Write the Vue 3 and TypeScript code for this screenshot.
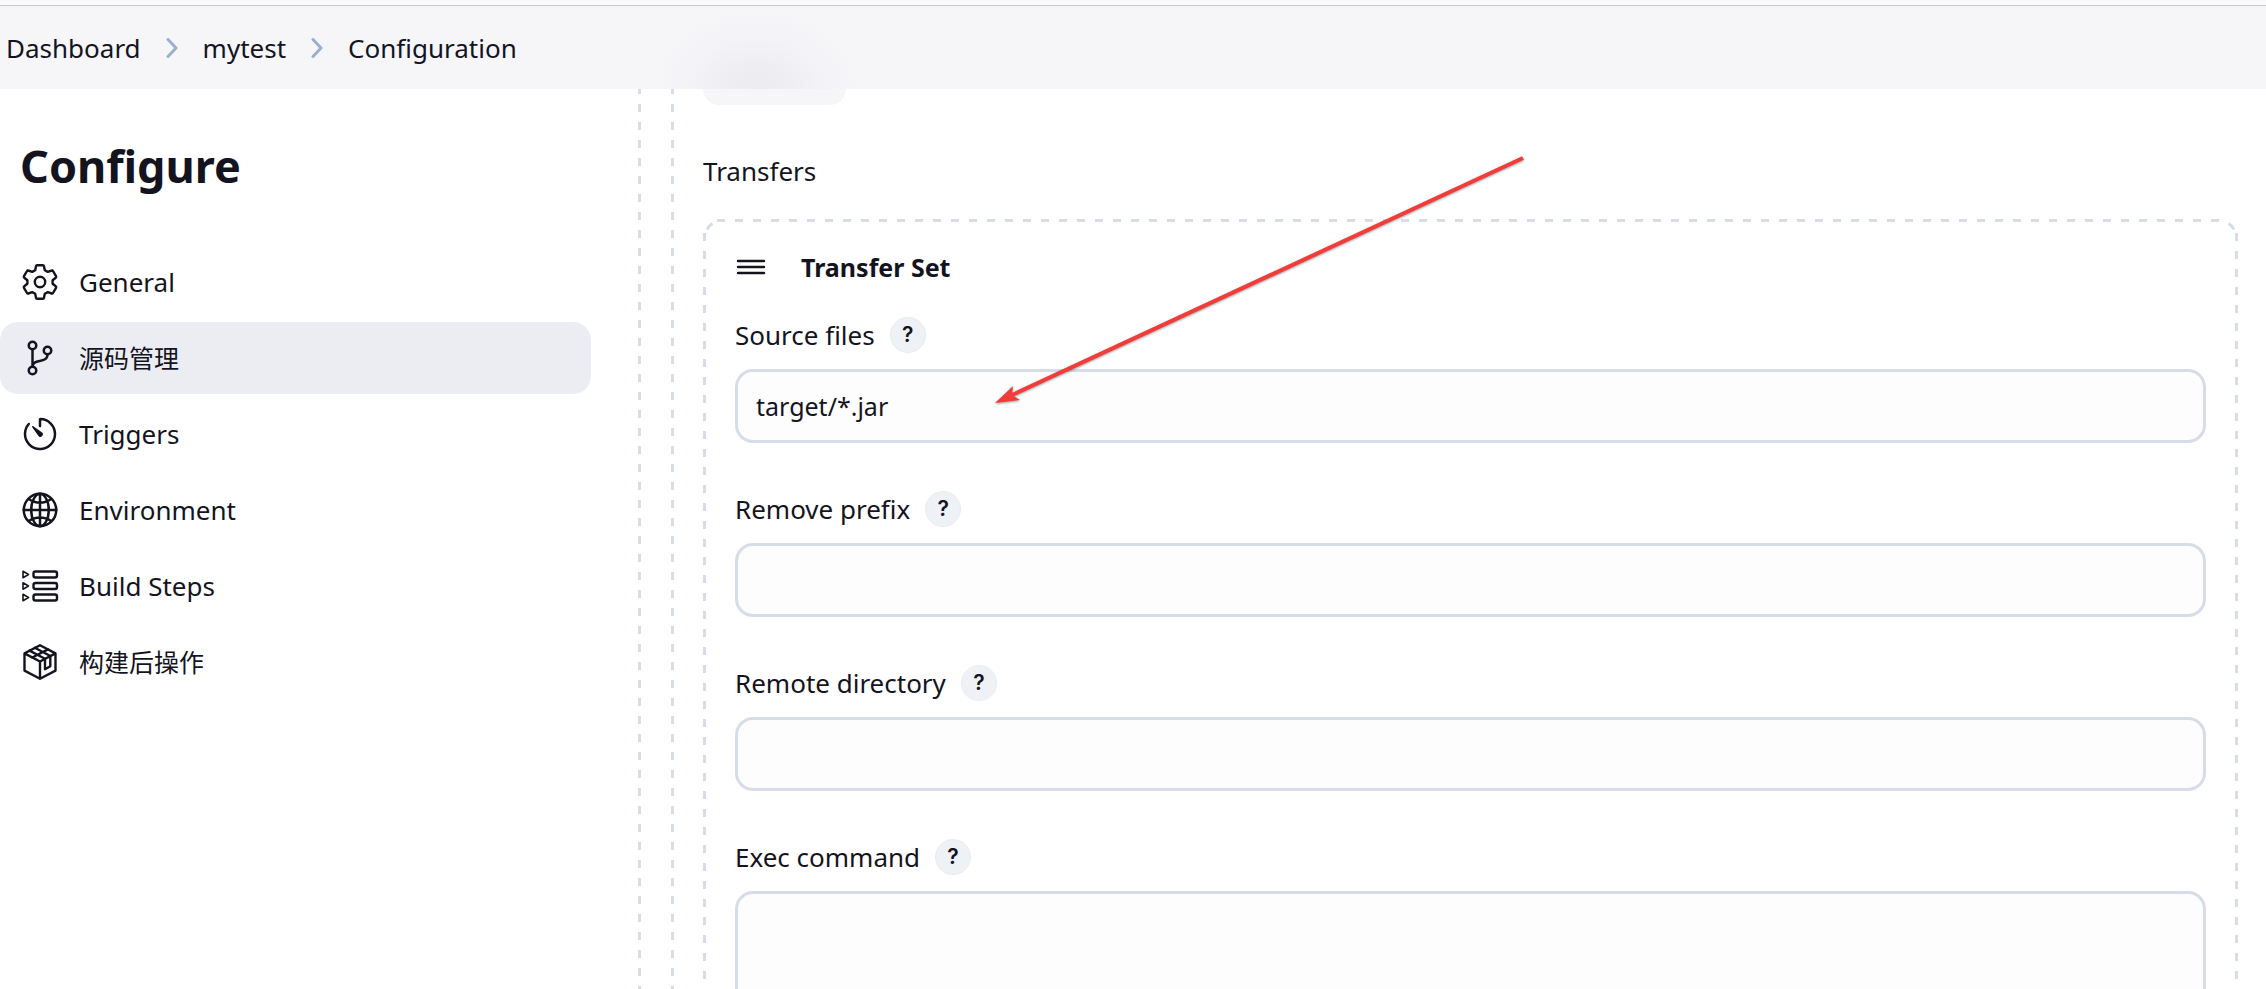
<script setup lang="ts">
import { ref } from 'vue'

interface NavItem {
  label: string
  icon: 'gear' | 'branch' | 'timer' | 'globe' | 'steps' | 'package'
  cjk?: boolean
}

interface Field {
  id: string
  label: string
  value: string
  multiline?: boolean
}

const crumbs = ['Dashboard', 'mytest', 'Configuration']

const navItems: NavItem[] = [
  { label: 'General', icon: 'gear' },
  { label: '源码管理', icon: 'branch', cjk: true },
  { label: 'Triggers', icon: 'timer' },
  { label: 'Environment', icon: 'globe' },
  { label: 'Build Steps', icon: 'steps' },
  { label: '构建后操作', icon: 'package', cjk: true },
]
const active = ref(1)

const fields = ref<Field[]>([
  { id: 'source-files', label: 'Source files', value: 'target/*.jar' },
  { id: 'remove-prefix', label: 'Remove prefix', value: '' },
  { id: 'remote-directory', label: 'Remote directory', value: '' },
  { id: 'exec-command', label: 'Exec command', value: '', multiline: true },
])
</script>

<template>
  <div class="page">
    <header class="topbar">
      <nav class="crumbs" aria-label="Breadcrumb">
        <template v-for="(crumb, i) in crumbs" :key="crumb">
          <svg v-if="i > 0" class="chevron" viewBox="0 0 12 20" aria-hidden="true">
            <path d="M2 1.5L10 10L2 18.5" />
          </svg>
          <a href="#">{{ crumb }}</a>
        </template>
      </nav>
    </header>

    <div class="body">
      <aside class="sidebar">
        <h1>Configure</h1>
        <nav class="tasks" aria-label="Sections">
          <a
            v-for="(item, i) in navItems"
            :key="item.label"
            href="#"
            class="task"
            :class="{ active: i === active, cjk: item.cjk }"
            @click.prevent="active = i"
          >
            <svg v-if="item.icon === 'gear'" class="icon" viewBox="-20 -20 40 40" aria-hidden="true">
              <g class="fine">
                <path d="M-4.8-11.8L-4-15.8Q-3.8-16.8-2.8-16.8H2.8Q3.8-16.8 4-15.8L4.8-11.8L7.8-10.1L11.7-11.5Q12.5-11.9 13-11L16-5.8Q16.5-4.9 15.8-4.3L12.6-1.7V1.7L15.8 4.3Q16.5 4.9 16 5.8L13 11Q12.5 11.9 11.7 11.5L7.8 10.1L4.8 11.8L4 15.8Q3.8 16.8 2.8 16.8H-2.8Q-3.8 16.8-4 15.8L-4.8 11.8L-7.8 10.1L-11.7 11.5Q-12.5 11.9-13 11L-16 5.8Q-16.5 4.9-15.8 4.3L-12.6 1.7V-1.7L-15.8-4.3Q-16.5-4.9-16-5.8L-13-11Q-12.5-11.9-11.7-11.5L-7.8-10.1Z" />
                <circle r="5.2" />
              </g>
            </svg>
            <svg v-else-if="item.icon === 'branch'" class="icon" viewBox="0 0 512 512" aria-hidden="true">
              <circle cx="160" cy="96" r="48" />
              <circle cx="160" cy="416" r="48" />
              <circle cx="352" cy="160" r="48" />
              <path d="M160 368V144M352 208c0 128-192 48-192 160" />
            </svg>
            <svg v-else-if="item.icon === 'timer'" class="icon" viewBox="0 0 512 512" aria-hidden="true">
              <path d="M112.91 128A191.85 191.85 0 0064 254c-1.18 106.35 85.65 193.8 192 194 106.2.2 192-85.83 192-192 0-104.54-83.55-189.61-187.5-192a4.36 4.36 0 00-4.5 4.37V152" />
              <path class="solid" d="M233.38 278.63l-79-113a8.13 8.13 0 0111.32-11.32l113 79a32.5 32.5 0 01-37.25 53.26 33.21 33.21 0 01-8.07-7.94z" />
            </svg>
            <svg v-else-if="item.icon === 'globe'" class="icon" viewBox="0 0 512 512" aria-hidden="true">
              <circle cx="256" cy="256" r="208" />
              <path d="M256 48c-58.07 0-112.67 93.13-112.67 208S197.93 464 256 464s112.67-93.13 112.67-208S314.07 48 256 48zM117.33 117.33c38.24 27.15 86.38 43.34 138.67 43.34s100.43-16.19 138.67-43.34M394.67 394.67c-38.24-27.15-86.38-43.34-138.67-43.34s-100.43 16.19-138.67 43.34M256 48v416M464 256H48" />
            </svg>
            <svg v-else-if="item.icon === 'steps'" class="icon" viewBox="-20 -20 40 40" aria-hidden="true">
              <g class="fine">
                <rect x="-6.5" y="-14.5" width="23.5" height="6" rx="2" />
                <rect x="-6.5" y="-3" width="23.5" height="6" rx="2" />
                <rect x="-6.5" y="8.5" width="23.5" height="6" rx="2" />
              </g>
              <g class="thin">
                <path d="M-17-14.7V-8.3L-11.5-11.5ZM-17-3.2V3.2L-11.5 0ZM-17 8.3V14.7L-11.5 11.5Z" />
              </g>
            </svg>
            <svg v-else class="icon" viewBox="-20 -20 40 40" aria-hidden="true">
              <g class="fine">
                <path d="M0-16.7L15.5-8.6V8.6L0 16.7L-15.5 8.6V-8.6ZM-15.5-8.6L0-.5L15.5-8.6M0-.5V16.7" />
                <path d="M-10.5-11.4L5-3.2V7.2L10.3 4.2V-6L-5.2-14.2M-7.7-4.5L8-12.6" />
              </g>
            </svg>
            <span>{{ item.label }}</span>
          </a>
        </nav>
      </aside>

      <main class="level outer">
        <div class="level inner">
          <div class="chip"></div>
          <h2>Transfers</h2>
          <section class="card">
            <svg class="corner left" viewBox="0 0 18 18" aria-hidden="true">
              <path d="M4 10.5Q6 6.5 9.5 4.5" />
            </svg>
            <svg class="corner right" viewBox="0 0 18 18" aria-hidden="true">
              <path d="M4 10.5Q6 6.5 9.5 4.5" />
            </svg>
            <div class="card-head">
              <button type="button" class="grip" aria-label="Reorder">
                <svg viewBox="0 0 32 20" aria-hidden="true">
                  <path d="M3 4H29M3 10H29M3 16H29" />
                </svg>
              </button>
              <h3>Transfer Set</h3>
            </div>
            <div v-for="field in fields" :key="field.id" class="field">
              <div class="label-row">
                <label :for="field.id">{{ field.label }}</label>
                <button type="button" class="help" :aria-label="`Help for ${field.label}`">?</button>
              </div>
              <textarea v-if="field.multiline" :id="field.id" v-model="field.value" class="box tall"></textarea>
              <input v-else :id="field.id" v-model="field.value" type="text" class="box" />
            </div>
          </section>
        </div>
      </main>
    </div>

    <svg class="pointer" viewBox="0 0 540 256" aria-hidden="true">
      <path d="M531 6L20 243" />
      <polygon points="3,251 21,234 20,243 28,248" />
    </svg>
  </div>
</template>

<style>
body {
  margin: 0;
  background: #fff;
}
</style>

<style scoped>
.page {
  --ink: #14141f;
  --line: #d7dde8;
  position: relative;
  height: 100vh;
  overflow: hidden;
  box-sizing: border-box;
  display: flex;
  flex-direction: column;
  color: var(--ink);
  font: 26px/36px "Noto Sans", "Noto Sans CJK SC", sans-serif;
}

a {
  color: inherit;
  text-decoration: none;
}

.topbar {
  flex: none;
  height: 83px;
  margin-top: 5px;
  border-top: 1px solid #c8c8cd;
  background:
    radial-gradient(100px 78px at 756px 100%, #ebebf0 0, #efeff3 35%, #f3f3f7 65%, transparent 100%),
    #f6f6f9;
  box-shadow: 0 -5px #fafafc;
}

.crumbs {
  display: flex;
  align-items: center;
  gap: 25px;
  height: 83px;
  padding-left: 6px;
}

.chevron {
  width: 12px;
  height: 20px;
  fill: none;
  stroke: #9ab0cc;
  stroke-width: 3;
  stroke-linecap: round;
  stroke-linejoin: round;
}

.body {
  flex: 1;
  min-height: 0;
  display: flex;
  gap: 47px;
}

.sidebar {
  flex: none;
  width: 591px;
}

h1 {
  margin: 40px 0 44px;
  padding-left: 20px;
  font-size: 45px;
  line-height: 73px;
  font-weight: 700;
}

.tasks {
  display: flex;
  flex-direction: column;
  gap: 4px;
}

.task {
  display: flex;
  align-items: center;
  gap: 19px;
  height: 72px;
  padding-left: 20px;
  border-radius: 18px;
}

.task.active {
  background: #ecedf3;
}

.task.cjk {
  font-size: 25px;
}

.icon {
  width: 40px;
  height: 40px;
  fill: none;
  stroke: var(--ink);
  stroke-width: 32;
  stroke-linecap: round;
  stroke-linejoin: round;
}

.icon .fine {
  stroke-width: 2.4;
}

.icon .thin {
  stroke-width: 1.6;
}

.icon .solid {
  fill: var(--ink);
  stroke: none;
}

.level {
  background: repeating-linear-gradient(to bottom, var(--line) 0 8px, transparent 8px 18px) 0 -3px / 3px calc(100% + 3px) no-repeat;
}

.outer {
  flex: 1;
  min-width: 0;
  padding: 0 28px 0 33px;
}

.inner {
  height: 100%;
  padding-left: 32px;
}

.chip {
  width: 143px;
  height: 16px;
  border-radius: 0 0 18px 18px;
  background: #f6f6f9;
}

h2 {
  margin: 0;
  padding: 48px 0 30px;
  font-size: 26px;
  font-weight: 400;
}

.card {
  position: relative;
  padding: 30px 32px;
  background:
    repeating-linear-gradient(to right, var(--line) 0 8px, transparent 8px 18px) 14px 0 / calc(100% - 30px) 3px no-repeat,
    repeating-linear-gradient(to bottom, var(--line) 0 8px, transparent 8px 18px) 0 14px / 3px 100% no-repeat,
    repeating-linear-gradient(to bottom, var(--line) 0 8px, transparent 8px 18px) 100% 14px / 3px 100% no-repeat;
}

.corner {
  position: absolute;
  top: 0;
  left: 0;
  width: 18px;
  height: 18px;
  fill: none;
  stroke: var(--line);
  stroke-width: 3;
}

.corner.right {
  left: auto;
  right: 0;
  transform: scaleX(-1);
}

.card-head {
  display: flex;
  align-items: center;
  gap: 34px;
  margin-bottom: 32px;
}

.grip {
  display: flex;
  padding: 0;
  border: 0;
  background: none;
}

.grip svg {
  width: 32px;
  height: 20px;
  stroke: var(--ink);
  stroke-width: 2.4;
  stroke-linecap: round;
}

h3 {
  margin: 0;
  font-size: 25px;
  font-weight: 700;
}

.field {
  margin-bottom: 48px;
}

.label-row {
  display: flex;
  align-items: center;
  gap: 15px;
  margin-bottom: 16px;
}

.help {
  width: 36px;
  height: 36px;
  padding: 0;
  border: 1px solid #e8ecf2;
  border-radius: 50%;
  background: #eef1f5;
  color: var(--ink);
  font: 600 21px/34px Inter, sans-serif;
}

.box {
  display: block;
  box-sizing: border-box;
  width: 100%;
  height: 74px;
  padding: 0 18px;
  border: 3px solid var(--line);
  border-radius: 18px;
  outline: 0;
  background: #fdfdfe;
  color: inherit;
  font: inherit;
}

input.box {
  font-size: 25px;
}

.box.tall {
  height: 200px;
  padding: 16px 18px;
  resize: none;
}

.pointer {
  position: absolute;
  top: 152px;
  left: 992px;
  width: 540px;
  height: 256px;
  fill: #f23c3a;
  stroke: none;
  filter: drop-shadow(0 1px 1px rgba(0, 0, 0, 0.4));
  pointer-events: none;
}

.pointer path {
  stroke: #f23c3a;
  stroke-width: 4;
}
</style>
